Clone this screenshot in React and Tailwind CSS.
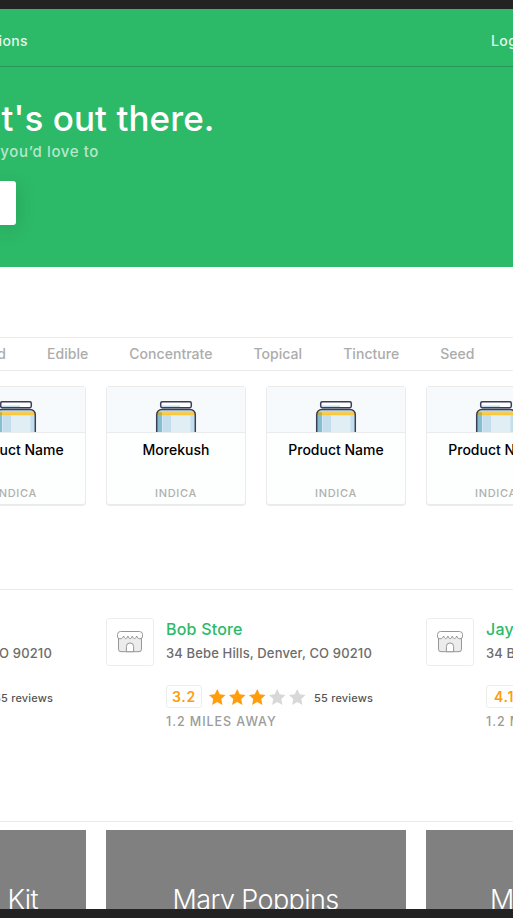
const tabs = [
  { label: "d", cls: "w-[6px] justify-end" },
  { label: "Edible", cls: "" },
  { label: "Concentrate", cls: "" },
  { label: "Topical", cls: "" },
  { label: "Tincture", cls: "" },
  { label: "Seed", cls: "" },
];

const products = ["Product Name", "Morekush", "Product Name", "Product Name"];

const stores = [
  { name: "", rating: "", stars: 0 },
  { name: "Bob Store", rating: "3.2", stars: 3 },
  { name: "Jay Store", rating: "4.1", stars: 4 },
];

function Jar() {
  return (
    <svg width="42" height="31" viewBox="0 0 42 31" fill="none" className="shrink-0">
      <rect x="5.7" y="0.7" width="30.6" height="6" rx="1.6" fill="#fff" />
      <path d="M6.5 4.5H25v1.5H6.5z" fill="#c2dcec" />
      <path d="M1.7 32V13.5a5 5 0 0 1 5-5h28.6a5 5 0 0 1 5 5V32z" fill="#e0eef6" />
      <path d="M2 32V12h5v20z" fill="#85bfcd" />
      <path d="M7 12h9v20H7z" fill="#c5deed" />
      <path d="M7 12h1v20H7z" fill="#d5e8f2" />
      <path d="M35.5 12h4.3v20h-4.3z" fill="#c5deed" />
      <path d="M4 9.3h34v2.2H3z" fill="#b9d5e6" />
      <path d="M2.2 11.3h37.6v3H2.2z" fill="#fcc934" />
      <path d="M2.2 11.3h4.8v3H2.2z" fill="#b3b552" />
      <path d="M1.7 32V13.5a5 5 0 0 1 5-5h28.6a5 5 0 0 1 5 5V32" stroke="#3b3e55" strokeWidth="1.5" />
      <rect x="5.7" y="0.7" width="30.6" height="6" rx="1.6" stroke="#3b3e55" strokeWidth="1.5" />
    </svg>
  );
}

function StoreIcon() {
  return (
    <svg width="26" height="22" viewBox="0 0 26 22" fill="none" stroke="#969696" strokeWidth="1">
      <path d="M1.5 6.500v11.700a2.500 2.500 0 0 0 2.500 2.500h18a2.500 2.500 0 0 0 2.500-2.500V6.500" fill="#ececec" />
      <path d="M9.400 20.700v-5.200a3.600 3.600 0 0 1 7.200 0v5.200z" fill="#fff" />
      <path
        d="M3.500.5h19a3 3 0 0 1 3 3v1.500c0 1.600-1 2.800-2.600 2.800-1.500 0-2.600-1-3.200-2.800-.7 1.800-1.200 2.600-2.200 2.600s-1.500-.8-2.200-2.600c-.7 1.800-1.200 2.600-2.200 2.600s-1.500-.8-2.200-2.600c-.7 1.800-1.200 2.600-2.100 2.600s-1.500-.8-2.200-2.600C5.700 6.800 4.600 7.800 3.100 7.800 1.500 7.800.5 6.600.5 5V3.500a3 3 0 0 1 3-3z"
        fill="#fff"
      />
    </svg>
  );
}

function Star({ on }) {
  return (
    <svg width="16.5" height="16.5" viewBox="0 0 16 16" fill={on ? "#ff9d0a" : "#d8d8d8"}>
      <path d="M8 0l2.400 5 5.600.7-4.100 3.900 1.100 5.800L8 12.700l-5 2.700 1.100-5.800L0 5.700 5.600 5z" />
    </svg>
  );
}

function Store({ name, rating, stars }) {
  return (
    <div className="flex w-[300px] shrink-0 gap-3">
      <div className="flex h-12 w-12 shrink-0 items-center justify-center rounded-[3px] border border-[#ededed]">
        <StoreIcon />
      </div>
      <div className="flex flex-col whitespace-nowrap">
        <div className="h-[23px] text-[16px] leading-[23px] font-medium tracking-[0.2px] text-[#2dba68]">{name}</div>
        <div className="h-6 text-[13px] leading-6 font-medium tracking-[0.14px] text-[#6c6c6c]">
          34 Bebe Hills, Denver, CO 90210
        </div>
        <div className="mt-5 flex h-6 shrink-0 items-center">
          <div className="-mt-px flex h-[23px] w-9 items-center justify-center rounded-[3px] border border-[#ededed] text-[14px] font-semibold tracking-[0.7px] text-[#ff9d0a]">
            {rating}
          </div>
          <div className="ml-[7px] flex gap-[3.5px]">
            {[0, 1, 2, 3, 4].map((i) => (
              <Star key={i} on={i < stars} />
            ))}
          </div>
          <div className="ml-[8.5px] pt-[2px] text-[11px] font-medium tracking-[0.2px] text-[#555]">55 reviews</div>
        </div>
        <div className="mt-px h-6 shrink-0 text-[12.5px] leading-6 font-medium tracking-[0.95px] text-[#9b9b9b]">
          1.2 MILES AWAY
        </div>
      </div>
    </div>
  );
}

export default function App() {
  return (
    <div className="flex h-[918px] w-[513px] flex-col overflow-hidden bg-white font-['Inter',sans-serif]">
      <div className="h-[9px] shrink-0 bg-[#222]" />
      <header className="flex h-[258px] shrink-0 flex-col bg-[#2dba68] text-white">
        <nav className="flex h-[58px] shrink-0 items-center justify-between border-b border-[#28985a] pt-[6px] text-[14px] font-medium tracking-[0.4px] text-[#e3f6eb]">
          <div className="flex w-7 justify-end">ions</div>
          <div className="w-[22px] whitespace-nowrap">Log in</div>
        </nav>
        <h1 className="mt-[27px] flex h-[48px] w-[214.5px] items-center justify-end text-[35px] font-medium tracking-[0.07px] whitespace-nowrap">
          at's out there.
        </h1>
        <p className="flex h-5 w-[99px] items-center justify-end text-[15px] font-medium tracking-[0.6px] whitespace-nowrap text-[#b7e7cb]">
          you’d love to
        </p>
        <div className="mt-[19px] h-11 w-4 rounded-r-[3px] bg-white shadow-[0_4px_20px_rgba(0,0,0,0.16)]" />
      </header>

      <div className="mt-[70px] flex h-[34px] shrink-0 items-center gap-[41px] border-y border-[#ececec] text-[14px] leading-5 font-medium tracking-[0.04px] text-[#acacac]">
        {tabs.map((t) => (
          <div key={t.label} className={"flex shrink-0 " + t.cls}>
            {t.label}
          </div>
        ))}
      </div>

      <div className="mt-[15px] -ml-[54px] flex shrink-0 gap-5">
        {products.map((p, i) => (
          <div
            key={i}
            className="flex h-[120px] w-[140px] shrink-0 flex-col items-center rounded-[4px] border border-b-2 border-[#ebebeb] bg-[#fdfefe]"
          >
            <div className="flex h-[46px] w-full shrink-0 items-end justify-center border-b border-[#ebebeb] bg-[#f6fafd]">
              <Jar />
            </div>
            <div className="mt-[5px] h-6 shrink-0 text-[14px] leading-6 font-medium text-black">{p}</div>
            <div className="mt-[20px] h-[22px] shrink-0 text-[11px] leading-[22px] font-medium tracking-[0.7px] text-[#b0b0b0]">
              INDICA
            </div>
          </div>
        ))}
      </div>

      <div className="mt-[83px] h-px shrink-0 bg-[#ececec]" />
      <div className="mt-[28px] -ml-[214px] flex h-[117px] shrink-0 gap-5">
        {stores.map((s, i) => (
          <Store key={i} {...s} />
        ))}
      </div>

      <div className="mt-[86px] h-px shrink-0 bg-[#ececec]" />
      <div className="mt-2 -ml-[214px] flex h-[79px] shrink-0 gap-5 overflow-hidden text-[27px] leading-[32px] font-light tracking-[-0.6px] whitespace-nowrap text-white">
        <div className="flex w-[300px] shrink-0 justify-end bg-[#808080] pt-[54px] pr-[48px]">Kit</div>
        <div className="flex w-[300px] shrink-0 justify-center bg-[#808080] pt-[54px] pr-px">Mary Poppins</div>
        <div className="flex w-[300px] shrink-0 bg-[#808080] pt-[54px] pl-[64px]">Mary</div>
      </div>
      <div className="h-[9px] shrink-0 bg-[#222]" />
    </div>
  );
}
